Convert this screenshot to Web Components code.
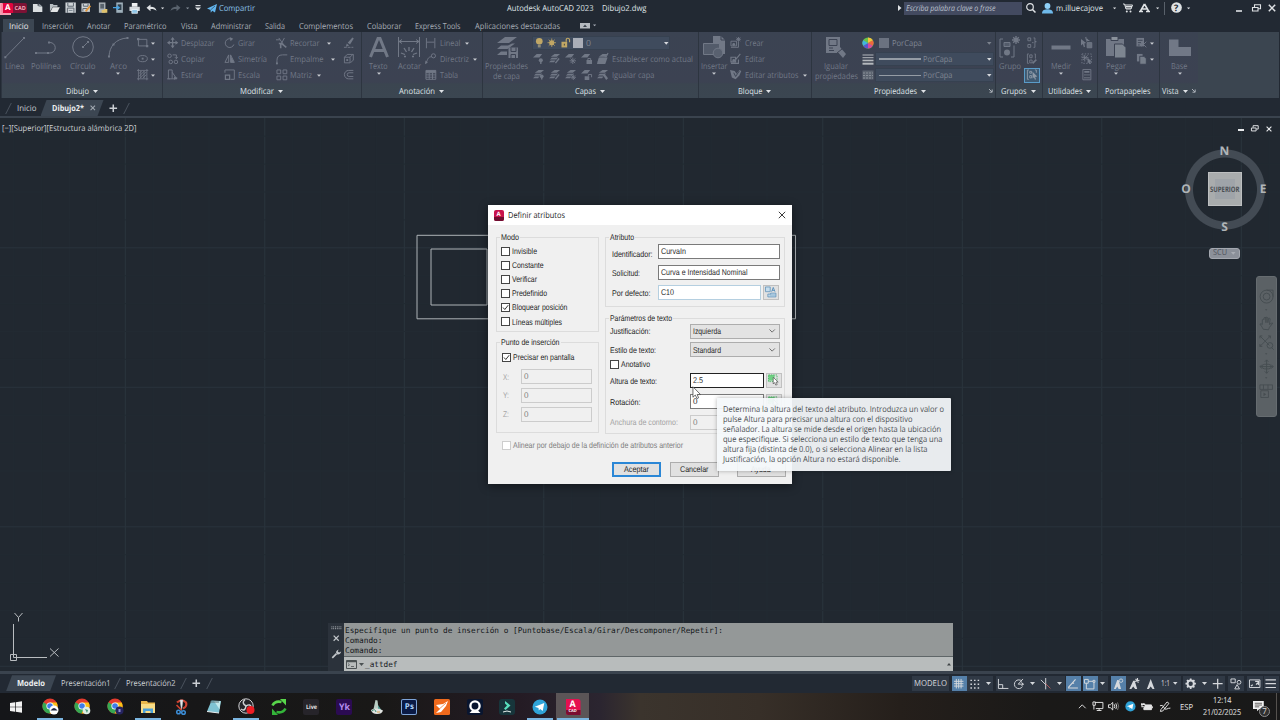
<!DOCTYPE html>
<html lang="es">
<head>
<meta charset="utf-8">
<title>Autodesk AutoCAD 2023 - Dibujo2.dwg</title>
<style>
    html, body {
        margin: 0;
        padding: 0;
    }
    body {
        --dy: .7px;
        width: 1280px;
        height: 720px;
        overflow: hidden;
        background: #212830;
        font: 8.3px/10px "Open Sans", "Noto Sans", sans-serif;
        text-rendering: geometricPrecision;
    }
</style>
</head>
<body>
<cad-app></cad-app>

<script>
// Icon table: [width, height, svg body]. Strokes use currentColor unless the icon has its own colours.
const F = 'fill="currentColor" stroke="none"';
const CHROME = `<g stroke="none"><circle cx="8" cy="8" r="7.6" fill="#e33b2e"/><path d="M8 8 1.4 4.2A7.6 7.6 0 0 0 7.5 15.6L11 9.6Z" fill="#36a852"/><path d="M8 4.4h6.7A7.6 7.6 0 0 1 7.5 15.6L11 9.5Z" fill="#fbc116"/><circle cx="8" cy="8" r="3.6" fill="#fff"/><circle cx="8" cy="8" r="2.8" fill="#3f7de8"/>`;
const LAYERS = `<path d="M2 4 6 1h6L8.500 4ZM1 7l2-1.800h5.500l1.500-.6L8 7ZM0 10l2-1.800h5L5.500 10Z" ${F}/>`;

const ICONS = {
    caret: [5, 3, `<path d="M0 0h5L2.500 3Z" ${F}/>`],
    caretSmall: [4, 3, `<path d="M0 .5h4L2 2.800Z" ${F}/>`],
    caretUp: [5, 3, `<path d="M0 3h5L2.500 0Z" ${F}/>`],
    caretRight: [4, 6, `<path d="M0 0v6L3.500 3Z" ${F}/>`],
    launcher: [5, 5, `<path d="M1 1l3 3M4.200 1.500v2.700H1.500"/>`],

    // quick access toolbar
    logo: [28, 12, `<rect width="12" height="12" x="-1" y="1" fill="#f7a0b4" stroke="none"/><path d="M2 1h9.500q2 0 2 1.500V11H2Z" fill="#e0063f" stroke="none"/><path d="M1 2 3 1v11L1 10Z" fill="#f68ba4" stroke="none"/><path d="M13.500 1H25q2 0 2 2v6.500q0 1.500-2 1.500H13.500Z" fill="#7c1235" stroke="none"/>`],
    newFile: [12, 10, `<path d="M1 1h5v2h2V1l3 3v5.500H1Z" fill="#d9dde0" stroke="none"/><path d="M7 .5 11 4H7Z" fill="#8b949c" stroke="none"/>`],
    open: [12, 10, `<path d="M1 9V1h3l1 1h4v2H4Z" fill="#b9bfc4" stroke="none"/><path d="M1.500 9.500 4 4.500h7.500L9 9.500Z" fill="#e3e5e6" stroke="none"/>`],
    save: [12, 12, `<path d="M.5.5h11v11H.5Z" fill="#cfd4d8" stroke="none"/><path d="M3 1v3.500h6V1M2.500 11.500v-5h7v5" stroke="#56606b"/><path d="M4 9h4" stroke="#7a858f"/>`],
    saveAs: [12, 12, `<path d="M.5 1.500h9v9h-9Z" fill="#cfd4d8" stroke="none"/><path d="M2.500 2v2.500h5V2M2 10V7h5" stroke="#56606b"/><path d="m5 10 5-6" stroke="#e0963d" stroke-width="2"/>`],
    openWeb: [12, 12, `<path d="M2 .5h7v11H2Z" fill="#aab1b7" stroke="none"/><path d="M3.500 2v5h4V2" fill="#59636d" stroke="none"/><path d="M5 11.500V8.500h2l1-1h3v4Z" fill="#e0c26c" stroke="none"/>`],
    saveWeb: [12, 12, `<path d="M3.500.5h7v11h-7Z" fill="#9fb0bb" stroke="none"/><path d="M5 2.500h4v6H5Z" fill="#30404d" stroke="none"/><path d="M0 6h6M4 4l2.500 2L4 8" stroke="#4aa3e0" stroke-width="1.500"/>`],
    print: [12, 11, `<path d="M3 0h6v4H3Z" fill="#eef0f1" stroke="none"/><path d="M.5 4h11v4.500H.5Z" fill="#d5d9dc" stroke="none"/><path d="M3 7h6v4H3Z" fill="#8fc6e8" stroke="#fff" stroke-width=".7"/>`],
    undo: [11, 8, `<path d="M4.500.5v2.200C8 2.700 10 4 10.500 7 9 5.300 7 4.900 4.500 5v2.200L.5 3.800Z" ${F}/>`],
    redo: [11, 8, `<path d="M6.500.5v2.200C3 2.700 1 4 .5 7 2 5.300 4 4.900 6.500 5v2.200l4-3.400Z" ${F}/>`],
    customize: [6, 6, `<path d="M.5 0v1.200h5V0ZM0 2.500h6L3 5.500Z" ${F}/>`],
    plane: [10, 9, `<path d="M0 4.500 10 0 8 8.500 5.200 6.800 3.800 8.800 3.500 6Z" fill="#62b5ee" stroke="none"/><path d="m3.500 6 4.500-4" stroke="#23303c" stroke-width=".6"/>`],
    search: [10, 10, `<circle cx="4" cy="4" r="3.300" stroke-width="1.200"/><path d="m6.500 6.500 3 3" stroke-width="1.500"/>`],
    user: [11, 11, `<circle cx="5.500" cy="3" r="2.900" fill="#8fd0f7" stroke="none"/><path d="M0 10.500C0 7 3 6.300 5.500 6.300S11 7 11 10.500Z" fill="#6fb9ea" stroke="none"/>`],
    cart: [10, 10, `<path d="M0 1h1.500L3 6h5l1.500-4H2M2.500 3.500h6.500M2.800 5h5.500"/><circle cx="3.800" cy="8.500" r="1" ${F}/><circle cx="7.500" cy="8.500" r="1" ${F}/>`],
    autodeskA: [11, 10, `<path d="M5.500 1 1.500 8M5.500 1l4 7M0 8.500h4M7 8.500h4M3.500 6h4" stroke-width="1.600"/>`],
    help: [12, 12, `<circle cx="6" cy="6" r="5.800" fill="#dfe2e4" stroke="none"/>`],
    min: [6, 8, `<path d="M0 7h6" stroke-width="1.600"/>`],
    restore: [9, 8, `<path d="M.5 3.500h5.500v3.500H.5ZM2.500 3V.800h6v4H6.500" stroke-width="1.100"/>`],
    close: [8, 8, `<path d="m.8.8 6.400 6.400M7.200.8.8 7.200" stroke-width="1.500"/>`],
    closeThin: [8, 8, `<path d="m.8.8 6.400 6.400M7.200.8.8 7.200" stroke-width=".9"/>`],
    mini: [6, 5, `<path d="M0 4h6" stroke-width="2"/>`],
    tabMark: [10, 6, `<path d="M0 0h10v5.500H0Z" fill="#b5bac0" stroke="none"/><path d="M5 1.500 7 4H3Z" fill="#3a424c" stroke="none"/>`],

    // ribbon, large
    line: [24, 24, `<path d="M2.500 22 21 3"/><path d="M1.300 21.300h2v2h-2ZM20 2h2v2h-2Z" ${F}/>`],
    pline: [24, 24, `<path d="M2 18h14a5.200 5.200 0 0 0 0-10.500"/><path d="M1 17h2v2H1ZM13 17h2v2h-2ZM14 6.500h2v2h-2Z" ${F}/>`],
    circle: [24, 24, `<circle cx="12" cy="12" r="10.300"/><path d="m12 12 4.500-4.500"/><path d="M11 11h2v2h-2ZM16 6h2v2h-2Z" ${F}/>`],
    arc: [24, 24, `<path d="M3 21.500C3.500 11 10 3.800 21 3"/><path d="M2 20.500h2v2H2ZM20.500 2h2v2h-2ZM6.500 8.500h2v2h-2Z" ${F}/>`],
    text: [24, 24, `<path d="M3.500 22 11 3.500h2L20.500 22M7 15.500h10" stroke-width="3"/>`],
    dim: [24, 24, `<path d="M1.500 2v20M22.500 2v20M2 6.500h20M5 4.500 2 6.500l3 2M19 4.500l3 2-3 2"/><path d="M12 12v4M7 13l2.500 4M17 13l-2.500 4M4 18l4 1.500M20 18l-4 1.500M7 21.500h2M15 21.500h2" stroke-width="1.300"/>`],
    layerProps: [24, 24, `<path d="m2 8 8-6h12l-8 6ZM2 14l4-3.500h7l4-2h3L12.500 14ZM2 20l4-3.500h6v3.500Z" ${F}/><path d="M13.500 12.500h9.500v10.500h-9.500Z" ${F}/><path d="M16 12.500v4h5v-4M16 23v-3.500h4.500V23" stroke="#3c4353"/>`],
    insert: [24, 24, `<path d="M11 1h8l4 4v14H11Z" ${F}/><path d="M1.500 8.500h16v11h-16Z" fill="#535b6a"/><circle cx="16" cy="18" r="4.800" fill="#596170"/><path d="M19 1v4h4" stroke="#3c4353"/>`],
    match: [24, 24, `<path d="M2 2h14v16H2Z" ${F}/><path d="M5 4.500h8v6H5ZM5 13h4M10 15.500H5" stroke="#3c4353"/><path d="m12 15 4-3 6 7-3 4Z" ${F}/><path d="m13 18 5-4" stroke="#3c4353"/>`],
    group: [24, 24, `<path d="M5 4H2v18h3M16 10.500V22h-3"/><path d="M6 7.500h6v4H6Z" fill="#535b6a"/><circle cx="9" cy="17.500" r="3" ${F}/><path d="M18 1v8M14 5h8M15.200 2.200l5.600 5.600M20.800 2.200l-5.600 5.600" stroke-width="1.400"/>`],
    measure: [24, 24, `<path d="M2.500 10.500h19v4h-19Z" ${F}/>`],
    paste: [24, 24, `<path d="M2 4h18v17H2Z" ${F}/><path d="M7 1.500h7v4H7Z" fill="#8a919b" stroke="#3c4353"/><path d="M10.500 9h8l3.500 3.500V23H10.500Z" fill="#7d8590" stroke="#3c4353"/>`],
    base: [24, 24, `<path d="M1 4.500h9.500V12H23v9H1Z" ${F}/>`],

    // ribbon, small
    rect: [12, 12, `<path d="M1.500 2.500h9v7h-9Z"/><path d="M0 1h2.500v2.500H0ZM9.500 8.500H12V11H9.500Z" ${F}/>`],
    ellipse: [12, 12, `<ellipse cx="6" cy="6" rx="5" ry="3.300"/><path d="M5 5h2v2H5Z" ${F}/>`],
    hatch: [12, 12, `<path d="M1.500 0v12M10.500 0v12M0 1.500h12M0 10.500h12M2 5l3-3M2 8l6-6M3 10l7-7M6 10l4-4M4 2v8M7.500 2v8" stroke-width=".9"/>`],
    move: [12, 12, `<path d="M6 1v10M1 6h10" stroke-width="1.300"/><path d="m6 0 2.200 3H3.800ZM6 12l2.200-3H3.800ZM0 6l3-2.200v4.400ZM12 6 9 3.800v4.400Z" ${F}/>`],
    copy: [12, 12, `<circle cx="2.700" cy="3" r="1.900"/><circle cx="4" cy="9.500" r="1.900"/><circle cx="9.500" cy="9.500" r="1.900"/><path d="M6 2h4v4M8.500 4.500 10 6l1.500-1.500"/>`],
    stretch: [12, 12, `<path d="M1.500 1h4v9.500h-4ZM5.500 3.500 10.500 10.500h-5M0 10.500h3"/><path d="m7.500 8 4 1.500-4 2Z" ${F}/>`],
    rotate: [12, 12, `<path d="M8 2.200A4.700 4.700 0 1 0 10.500 8"/><path d="M6 0 9.800 1.800 7 4.500Z" ${F}/>`],
    mirror: [12, 12, `<path d="M5 2v8H1ZM7 2v8h4Z"/><path d="M7 3v7h4Z" ${F}/>`],
    scale: [12, 12, `<path d="M1 4V1h10v10H7"/><path d="M1.500 6.500h4.500v4.500H1.500Z" stroke-width="1.300"/>`],
    trim: [12, 12, `<path d="m3 1 5 7M9 1 5 8M0 3h4"/><path d="M3 7h3l5 4M5 7v5" stroke-width="1.700"/>`],
    fillet: [12, 12, `<path d="M1 12V8q0-6 6-6h5"/><path d="M0 10h2v2H0Z" ${F}/>`],
    array: [12, 12, `<path d="M1 1h4v4H1ZM7.500 1h4v4h-4ZM1 7.500h4v4H1ZM7.500 7.500h4v4h-4Z"/>`],
    erase: [12, 12, `<path d="m5 6 5-5.500 1.500 1.200L7.500 8ZM4 7l2.500 2L3 10.500Z" ${F}/><path d="M1 11h10" stroke-dasharray="3 1"/>`],
    explode: [12, 12, `<path d="M1.500 4.500h6v6h-6ZM1.500 4.500l3-3h6.500v6l-3 3M7.500 4.500l3-3"/><path d="M3.500 6.500h2v2h-2Z" ${F}/>`],
    offset: [12, 12, `<path d="M11 1.500H6a4.500 4.500 0 0 0 0 9h5M11 4H6.500a2 2 0 0 0 0 4H11"/>`],
    linear: [12, 12, `<path d="M1.500 1v11M10.500 1v11M2 5.500h8"/>`],
    leader: [12, 12, `<circle cx="9" cy="3" r="2.200"/><path d="M7 4C3 4 3 7 1 11"/><path d="m0 12 .5-4 2.500 2Z" ${F}/>`],
    table: [12, 12, `<path d="M1 1.500h10.500v9.500H1ZM1 4h10.500M1 6.300h10.500M1 8.700h10.500M4.500 4v7M8 4v7"/><path d="M1 1.500h10.500V4H1Z" ${F}/>`],
    layOff: [12, 12, `<path d="m0 5 4-4h6L7 5Z" ${F}/><circle cx="8.500" cy="8" r="2.200" ${F}/><path d="M8.500 9v3" stroke-width="1.500"/>`],
    layIso: [12, 12, LAYERS + `<path d="m7 11 4-5" stroke-width="1.500"/>`],
    layFrz: [12, 12, `<path d="m0 5 4-4h6L7 5Z" ${F}/><path d="M8.500 5v7M5 8.500h7M6 6l5 5M11 6l-5 5"/>`],
    layLock: [12, 12, `<path d="m0 5 4-4h6L7 5ZM6 7.500h6V12H6Z" ${F}/><path d="M7.500 8V6h3v2"/>`],
    layCur: [12, 12, LAYERS + `<path d="M2 5h9.500L9 12H0Z" ${F}/><path d="m8 3 2 1 2-4" stroke-width="1.300"/>`],
    layOn: [12, 12, LAYERS + `<circle cx="9.500" cy="8" r="2" ${F}/><path d="M9.500 9v2.500" stroke-width="1.500"/>`],
    layThaw: [12, 12, LAYERS + `<path d="M9 6v6M6.500 9h5.500M7 7l4 4M11 7l-4 4"/>`],
    layUnlock: [12, 12, `<path d="m0 5 4-4h6L7 5ZM4 8h5v4H4Z" ${F}/><path d="M8 8V6h3.500v3"/>`],
    layMatch: [12, 12, LAYERS + `<path d="m6 6 2-1 4 5-2 2Z" ${F}/>`],
    blockNew: [12, 12, `<path d="M1 4.500h6v5H1ZM1 11h8M9 5v6"/><path d="M9 0v5M6.500 2.500h5M7 .7l4 3.600M11 .7 7 4.300"/><circle cx="4" cy="8" r="1.500" ${F}/>`],
    blockEdit: [12, 12, `<path d="M1 4.500h5v5H1ZM1 11h8V7M6 7l5-6" stroke-width="1.200"/><circle cx="4" cy="8" r="1.500" ${F}/>`],
    attEdit: [12, 12, `<path d="m0 1 5 1 2 3 3-4 2 1-2 5-4 4-4-2Z" ${F}/><path d="m4 4 2 4 4-6" stroke="#3c4353"/>`],
    wheel: [12, 12, `<g stroke="none"><circle cx="6" cy="6" r="5.600" fill="#69c24a"/><path d="M6 6 6 .4A5.600 5.600 0 0 1 10.900 3.200Z" fill="#f4c33c"/><path d="M6 6 10.900 3.200A5.600 5.600 0 0 1 10.900 8.800Z" fill="#f0683c"/><path d="M6 6 10.900 8.800A5.600 5.600 0 0 1 6 11.600Z" fill="#d64a9a"/><path d="M6 6V11.600A5.600 5.600 0 0 1 1.100 8.800Z" fill="#5b55d0"/><path d="M6 6 1.100 8.800A5.600 5.600 0 0 1 1.100 3.200Z" fill="#41b4e0"/></g>`],
    weights: [12, 12, `<path d="M.5 2h11M.5 4.700h11" stroke="#b4b8bd"/><path d="M.5 7.500h11" stroke="#b4b8bd" stroke-width="1.600"/><path d="M.5 10.700h11" stroke="#b4b8bd" stroke-width="2"/>`],
    ltype: [12, 12, `<path d="M.5 1.500h11v9H.5Z" fill="#5c6470" stroke="none"/><path d="M1 4h10M1 6.500h10M1 9h10" stroke="#8a9099" stroke-dasharray="2 1"/>`],
    bulb: [9, 12, `<circle cx="4.500" cy="4.500" r="3.500" fill="#c0a765" stroke="none"/><path d="M3 8h3v3H3Z" fill="#8d8b79" stroke="none"/>`],
    sun: [10, 12, `<circle cx="5" cy="6" r="2.700" fill="#c0a765" stroke="none"/><path d="M5 1.500v9M.5 6h9M1.800 2.800l6.400 6.400M8.200 2.800 1.800 9.200" stroke="#c0a765" stroke-width=".8"/>`],
    lock: [10, 12, `<path d="M.5 5h6v6h-6Z" fill="#c0a765" stroke="none"/><path d="M5.500 5V3q0-1.700 1.700-1.700T9 3v2.500" stroke="#c0a765" stroke-width="1.200"/><path d="M3 7h1v2H3Z" fill="#3c3f42" stroke="none"/>`],
    ungroup: [12, 12, `<path d="M2 1h3v3H2ZM2 8h3v3H2ZM8 1h1.500v4h1.500H9.500v6H8M6.500 6H8"/>`],
    grpEdit: [12, 12, `<path d="M3 1H1.500v10H3M4 2h2.500v3H4ZM4 7.500h2.500v3H4ZM9 1h1v5"/><path d="m7 11 4-4" stroke-width="1.700"/>`],
    grpSel: [12, 12, `<path d="M3 1H1.500v10H3M4 2.500h2v2H4ZM4 7h2v2.500H4ZM9.500 1H11v3"/><path d="M7 3v7l1.500-1.200 1 2.700 1.200-.5-1-2.600 2.300-.3Z" ${F}/>`],
    qselect: [12, 12, `<path d="M0 2v7l2-1.500L3 11l1.300-.7L3.500 7 5.500 6.500Z" ${F}/><path d="M6.500 6h5v5.500h-5Z" fill="#69717e"/><path d="m5 0 .8 3L9 4M7 2l-1 3" stroke-width="1.200"/>`],
    selAll: [12, 12, `<path d="M1 1h10v10H1Z" stroke-dasharray="1.500 1.500"/><path d="M4 2v7M1 5h7M2 2.500l5 5M7 2.500l-5 5"/><path d="M7 5v6l1.500-1 1 2 1-.6-.8-2 1.800-.4Z" ${F}/>`],
    calc: [12, 12, `<path d="M2 .5h8.500v11H2Z"/><path d="M3.500 2h5.500v2H3.500ZM3.500 5.500H5V7H3.500ZM5.700 5.500h1.400V7H5.700ZM7.800 5.500h1.400V7H7.800ZM3.500 8.500H5V10H3.500ZM5.700 8.500h1.400V10H5.700ZM7.800 8.500h1.400V10H7.800Z" ${F}/>`],
    cut: [12, 12, `<path d="M.5 1h8v9h-8Z" ${F}/><path d="M2 3.500h5M2 6h4M2 8.500h2" stroke="#3c4353"/><path d="m5 5 6 6M11 5l-5 5"/>`],
    copyClip: [12, 12, `<path d="M1 1h6v8H1Z" ${F}/><path d="M4 3.500h4.500l2.500 2.500v6H4Z" fill="#767e8a" stroke="#3c4353"/>`],

    // model space
    wheelNav: [16, 16, `<circle cx="8" cy="8" r="6.800"/><circle cx="8" cy="8" r="3.600"/><path d="M8 1.200h6.800V8"/>`],
    hand: [16, 16, `<path d="M4.500 14C3 11 2 10 1 8.500q1-1 2.500.5V4q1-1.500 1.800 0V2q1.200-1.500 2 0v5V1.500q1.300-1 2 .5v5l.8-4.500q1.500-.7 1.600.7L11 9q2-2 3.500-1.500L11 12l-1 2.500Z"/>`],
    zoomExt: [16, 16, `<path d="m1 1 10 10M12 1 1 12M1 3.500V1h2.500M9.500 1H12v2.500M1 9.500V12h2.500"/><circle cx="11.500" cy="11" r="3"/><path d="m13.500 13.500 2 2"/>`],
    orbit: [16, 16, `<path d="M8 1v14M1 8h14M6 3l2-2 2 2M6 13l2 2 2-2M3 6 1 8l2 2M13 6l2 2-2 2"/><ellipse cx="8" cy="8" rx="5" ry="2.500"/>`],
    motion: [16, 16, `<path d="M1 1h14v5H1ZM5 1v5M10 1v5M2 7.500h8.500v7.500H2Z"/><path d="M5 9.500v4l3-2Z" ${F}/>`],
    wrench: [12, 12, `<path d="m1.500 10.500 5-5" stroke-width="2"/><path d="M6 4.500Q5.500 2 9 .5L8 3l1.500 1L12 3Q11 7 7.500 6.500Z" ${F}/>`],
    grip: [12, 4, `<path d="M.5 1h11M.5 3h11" stroke-dasharray="1 1"/>`],
    prompt: [11, 9, `<path d="M.5.5h10v8H.5Z"/><path d="M.5 1.500h10" stroke-width="1.500"/><path d="m2 3.500 1.500 1.300L2 6M5 6.500h3" stroke-width=".8"/>`],

    // status bar
    grid: [12, 12, `<path d="M3.500 1v10M8.500 1v10M6 1v10M1 3.500h10M1 8.500h10M1 6h10"/>`],
    dots: [12, 12, `<path d="M1.500 2.500h10M1.500 6.500h10M1.500 10.500h10" stroke-dasharray="1.600 2.200" stroke-width="1.500"/>`],
    ortho: [12, 12, `<path d="M1.500 1v10H12M2 7h4v4"/>`],
    polar: [12, 12, `<path d="M9.500 3.500A4.600 4.600 0 1 0 10 9M5.500 6.500h6M5.500 6.500 10.500 1M9 4.500l1.500 2-1.500 2"/>`],
    iso: [12, 12, `<path d="m1 2 5 5M6 0v12"/><path d="m6 6 5 5" stroke="#b0595c"/>`],
    track: [12, 12, `<path d="M1 10.500h10.500M1.500 10 9 1.500M5.500 5.500h2" stroke-width="1.200"/>`],
    osnap: [12, 12, `<path d="M2.500 3.500h8v8h-8Z"/><path d="M.5 1.500h4v4h-4ZM9.500 2.500h2v2h-2Z" fill="#5580a9"/>`],
    annoVis: [12, 12, `<path d="M5.500 2 2 11.500h2L5.500 9 7 11.500h2.500L7 2Z" ${F}/><circle cx="9.500" cy="2.800" r="1.800" stroke-width=".9"/>`],
    annoAuto: [12, 12, `<path d="M5.500 3 1.500 11.500h2L5.500 9l2 2.500h2.200L7 3Z" ${F}/><path d="M7 3.500 12 2.500M8 1l3 4M10 0v4" stroke-width="1.200"/>`],
    anno: [12, 12, `<path d="M6 1 2 11.500h2L6 9l2 2.500h2Z" ${F}/>`],
    gear: [12, 12, `<circle cx="6" cy="6" r="3.300" stroke-width="2"/><path d="M6 .5v2M6 9.500v2M.5 6h2M9.500 6h2M2.100 2.100l1.400 1.400M8.500 8.500l1.400 1.400M9.900 2.100 8.500 3.500M3.500 8.500 2.100 9.900" stroke-width="1.800"/>`],
    plus: [12, 12, `<path d="M6 .8v10.400M.8 6h10.400" stroke-width="1.300"/>`],
    plusTab: [9, 9, `<path d="M4.500.5v8M.5 4.500h8" stroke-width="1.600"/>`],
    isolate: [12, 12, `<path d="M1 1h4.500v4H1ZM5 11.500h5L7.500 7Z"/><circle cx="9.500" cy="4.500" r="2"/>`],
    clean: [12, 12, `<path d="M.5 2h11v8H.5Z"/><path d="M6.500 3.500H10V6.500L8.800 5.500 7.500 7M2 8.500 4 7" stroke-width="1.300"/>`],
    menu: [12, 12, `<path d="M.5 2h11M.5 6h11M.5 10h11" stroke-width="1.300"/>`],

    // taskbar
    windows: [12, 12, `<path d="m0 2 5-.7v4.400H0ZM5.700 1.200 12 .3v5.400H5.700ZM0 6.300h5v4.400L0 10ZM5.700 6.300H12v5.400l-6.300-.9Z" fill="#f2f2f2" stroke="none"/>`],
    chrome1: [17, 17, CHROME + `<circle cx="12" cy="12" r="4.500" fill="#fff"/><path d="M8.500 12.500q3.500-5 7 0Z" fill="#1d2740"/></g>`],
    chrome2: [17, 17, CHROME + `<circle cx="12.500" cy="12.500" r="3.800" fill="#dfeee5"/><path d="M11 11l2 4 1-3Z" fill="#4a9a7c"/></g>`],
    chrome3: [17, 17, CHROME + `<circle cx="12.500" cy="12.500" r="4" fill="#25235f"/><path d="M11.500 11h2v3h-2Z" fill="#8f8ad0"/></g>`],
    folder: [16, 16, `<g stroke="none"><path d="M1 2h6l1 1.500h7V14H1Z" fill="#e9b84c"/><path d="M1 5h14v9H1Z" fill="#f8dc85"/><path d="M3 9.500h10V14h-2.500v-2h-5v2H3Z" fill="#4b9fd8"/></g>`],
    snip: [16, 16, `<path d="M4 3.500Q9-1 13 3.500 14.500 7.500 10 9.500" stroke="#cf4230" stroke-width="2.200"/><path d="M7 1 8.500 11.500 10 1Z" fill="#e5e8ea" stroke="#bcc3c8" stroke-width=".5"/><path d="m3.500 6 5 5" stroke="#cf4230" stroke-width="1.600"/><circle cx="5.500" cy="13" r="1.800" stroke="#3c8dd6" stroke-width="1.500"/><circle cx="10.500" cy="13.500" r="1.800" stroke="#3c8dd6" stroke-width="1.500"/>`],
    note: [16, 16, `<path d="M5.500 1.500 15 2l-2 12-12-1.500Z" fill="#7fc3d3" stroke="none"/><path d="m8 2 6.500.3-1 8Z" fill="#c4e9ec" stroke="none"/><path d="m1 12.500 12 1.500" stroke="#e9edee"/><path d="M4 3h9" stroke="#5a7077"/>`],
    obs: [17, 17, `<circle cx="8" cy="8" r="7.200" fill="#25252a" stroke="#cfcfd2"/><path d="M8 8Q3 5 7 1.500M8 8q5-3 5 2M8 8Q7 14 3 11" stroke="#cfcfd2" stroke-width="1.500"/><circle cx="12.500" cy="12" r="4" fill="#ee1c23" stroke="none"/>`],
    sync: [16, 16, `<path d="M1.500 6.500Q4 1.500 10.500 3" stroke="#58d64b" stroke-width="2.600"/><path d="M9 0h6v6.500Z" fill="#58d64b" stroke="none"/><path d="M14.500 9.500Q12 14.500 5.500 13" stroke="#34b53a" stroke-width="2.600"/><path d="M7 16H1V9.500Z" fill="#34b53a" stroke="none"/>`],
    boat: [16, 16, `<path d="M6.500 1 8.500 1.500 9.500 10H4.500Z" fill="#b9cdc4" stroke="none"/><path d="M9 6 13 12 9 11Z" fill="#5aa39a" stroke="none"/><path d="M2 11q6-3 12 .5Q13 15 8 15T2 11Z" fill="#e1e4e1" stroke="none"/><path d="M3 12q3-3 4 1" stroke="#3d8f73"/><path d="M8 13h3" stroke="#d8a155"/>`],
    orange: [16, 16, `<rect width="16" height="16" rx="1.500" fill="#f06a1c" stroke="none"/><path d="M2 6 9 5l5-3-2 5-5 6-5 1 4-4Z" fill="#fff" stroke="none"/><path d="m3 12 9-8" stroke="#f06a1c" stroke-width=".7"/>`],
    ring: [16, 16, `<rect width="16" height="16" rx="2" fill="#09152f" stroke="none"/><circle cx="8" cy="7" r="4.600" fill="#09152f" stroke="#fff" stroke-width="2.300"/><path d="m2.500 14 3-3h5l3 3Z" fill="#fff" stroke="none"/>`],
    filmora: [16, 16, `<rect width="16" height="16" rx="3" fill="#17353b" stroke="none"/><path d="m6 2 5.500 4.500L6.500 11 5 9.500l3-3-2-2Z" fill="#58e0bd" stroke="none"/><path d="M4 13q4-2 8 0" stroke="#e8f2f0"/>`],
    telegram: [16, 16, `<circle cx="8" cy="8" r="7.500" fill="#2fa3d8" stroke="none"/><path d="m2.800 7.800 9.500-3.800-1.600 8-2.500-1.900-1.400 1.300-.3-2.400Z" fill="#fff" stroke="none"/>`],
    acad: [16, 16, `<path d="M1 0h12q2.500 0 2.500 2.500V16H3.500Q1 16 1 14Z" fill="#e51050" stroke="none"/><path d="M1 11h14.500v5H3.500Q1 16 1 14Z" fill="#7b0d31" stroke="none"/>`],
    chevUp: [10, 6, `<path d="m1 5 4-4 4 4" stroke-width="1.100"/>`],
    net: [12, 11, `<path d="M3 1.500h8.500V8H4M1 1h2.500v3.500H1ZM5 10h5M7.500 8v2M2 4.500V9"/>`],
    sound: [12, 11, `<path d="M.5 4v3H2.500L5 9.500v-8L2.500 4Z"/><path d="M6.500 3.500q1.500 2 0 4M8.200 2.500q2 3 0 6"/><path d="M10 1.500q2.500 4 0 8" stroke-opacity=".45"/>`],
    battery: [12, 8, `<path d="M4 2h7v5H3V5" fill="#e5e5e5"/><path d="M0 1.500h4.500M1 0v1.500M3 0v1.500M1 2v2h2.500" stroke-width="1.200"/><path d="M12 3.500v2"/>`],
    pen: [12, 12, `<path d="M2 9 8.500 1l2 1.500L4 10.500l-2.500.5ZM1 5q3-1.500 4 1.500T8 8.500t4-1"/>`],
    notif: [13, 12, `<path d="M0 0h12v9H7l-2.500 2.500V9H0Z" fill="#f1f1f1" stroke="none"/><path d="M2 2.500h8M2 4.500h8M2 6.500h5" stroke="#33302d" stroke-width=".8"/>`],

    // dialog
    dlgLogo: [10, 11, `<rect width="10" height="11" rx="2" fill="#c7124c" stroke="none"/><path d="M0 7h10v2q0 2-2 2H2Q0 11 0 9Z" fill="#6f0d30" stroke="none"/>`],
    field: [12, 12, `<path d="M.5 1h5v5h-5ZM6 7.500h5.500v4H3v-3h3Z" fill="#c6dded" stroke="#5b8db5" stroke-width=".8"/><path d="m7 6 1.700-4.500L10.500 6M7.600 4.600h2.200" stroke="#3c7fb4" stroke-width=".8"/><path d="M5 9.500h6" stroke="#5b8db5" stroke-width=".6"/>`],
    pick: [12, 12, `<path d="M.5 1h6.500v6H.5Z" fill="#6fd083" stroke="none"/><path d="M.5 1h9v7h-9Z" stroke="#4db868" stroke-dasharray="1.500 1"/><path d="M5.500 3.500v7L7 9l1.200 2.700 1.500-.6L8.500 8.500h2.200Z" fill="#fff" stroke="#4b4b4b" stroke-width=".7"/>`],
    chev: [7, 4, `<path d="m.5.500 3 3 3-3" stroke="#555" stroke-width=".9"/>`],
    cursor: [10, 14, `<path d="M1 .8v11l2.500-2.300 1.700 3.700 1.800-.8L5.400 9H9Z" fill="#fff" stroke="#444" stroke-width=".8"/>`],
};

class CadElement extends HTMLElement {
    constructor() {
        super();
        this.attachShadow({ mode: "open" });
    }

    connectedCallback() {
        this.shadowRoot.innerHTML = `<style>${this.styles()}</style>${this.template()}`;
    }

    attr(name, fallback = "") {
        return this.getAttribute(name) ?? fallback;
    }

    styles() { return ""; }
    template() { return "<slot></slot>"; }
}

class UiIcon extends CadElement {
    styles() {
        return `
            :host { display: block; flex: none; }
            svg { display: block; overflow: visible; fill: none; stroke: currentColor; }
        `;
    }

    template() {
        const [w, h, body] = ICONS[this.attr("name")];
        const k = Number(this.attr("scale", "1"));
        return `<svg width="${w * k}" height="${h * k}" viewBox="0 0 ${w} ${h}">${body}</svg>`;
    }
}

// One line of text, condensed or widened so that it takes exactly "w" pixels
class FitText extends CadElement {
    styles() {
        return `
            :host { display: block; flex: none; white-space: nowrap; }
            span { display: inline-block; vertical-align: top; transform-origin: 0 0; }
        `;
    }

    template() { return "<span><slot></slot></span>"; }

    connectedCallback() {
        super.connectedCallback();
        const w = Number(this.attr("w"));
        const span = this.shadowRoot.querySelector("span");
        const natural = span.getBoundingClientRect().width;
        this.style.width = w + "px";
        span.style.transform = `translateY(var(--dy)) scaleX(${w / natural})`;
    }
}

const icon = (name, style = "", scale = 1) => `<ui-icon name="${name}" scale="${scale}" style="${style}"></ui-icon>`;
const text = (s, w, style = "") => `<fit-text w="${w}" style="${style}">${s}</fit-text>`;

// A box of fixed width that centres what it holds
class BarSlot extends CadElement {
    styles() {
        return `
            :host { display: flex; flex: none; align-items: center; justify-content: center; box-sizing: border-box; width: ${this.attr("w")}px; }
            :host([boxed]) { background: #303945; height: 15px; }
            :host([on]) { background: #5580a9; height: 15px; }
        `;
    }
}
const slot = (w, inner, style = "", attrs = "") => `<bar-slot w="${w}" style="${style}" ${attrs}>${inner}</bar-slot>`;

class TitleBar extends CadElement {
    styles() {
        return `
            :host { display: flex; height: 16px; align-items: center; background: #222933; color: #dfe2e5; box-sizing: border-box; }
            .brand { position: relative; width: 30px; }
            .brand b { position: absolute; left: 5px; top: 1px; font: 700 8px/10px "Open Sans", sans-serif; color: #fff; }
            .brand i { position: absolute; left: 14.500px; top: 1px; font: 700 5.5px/10px "Open Sans", sans-serif; color: #f1a8ba; }
            .search { display: flex; align-items: center; width: 118px; height: 13px; margin-left: 2.500px; padding-left: 2px; box-sizing: border-box; background: #434a60; color: #bcc1cd; font-style: italic; }
            .q { position: absolute; color: #222933; font-weight: 700; font-size: 9px; }
        `;
    }

    template() {
        const quick = ["newFile", "open", "save", "saveAs", "openWeb", "saveWeb", "print"];
        return `
            <div class="brand">${icon("logo")}<b>A</b><i>CAD</i></div>
            ${quick.map(n => slot(16.1, icon(n, "", 0.94))).join("")}
            ${slot(17.5, icon("undo"))}${slot(5, icon("caretSmall", "", 0.8))}
            ${slot(21, icon("redo"), "color:#59626d")}${slot(3, icon("caretSmall", "", 0.8), "color:#87909a")}
            ${slot(17, icon("customize"))}
            ${slot(12, icon("plane"))}
            ${text("Compartir", 36, "color:#8cc3ea;margin-left:1px")}
            ${text("Autodesk AutoCAD 2023", 86.5, "margin-left:251.500px")}
            ${text("Dibujo2.dwg", 44.5, "margin-left:8.500px")}
            ${icon("caretRight", "margin-left:251.500px")}
            <div class="search">${text("Escriba palabra clave o frase", 89.5)}</div>
            ${slot(18, icon("search"))}${slot(14, icon("user"))}
            ${text("m.illuecajove", 47, "margin-left:2px")}
            ${slot(22, icon("caretSmall", "", 0.8))}${slot(6, icon("cart"))}
            ${slot(26, icon("autodeskA"))}${slot(0, icon("caretSmall", "", 0.8), "margin-right:7px")}
            ${slot(1, "", "height:13px;background:#59616b;margin-right:3px")}
            ${slot(16, `${icon("help", "", 0.92)}<div class="q">?</div>`)}
            ${slot(8, icon("caretSmall", "", 0.8))}
            ${slot(17, icon("min"), "margin-left:38.500px")}${slot(17, icon("restore"))}${slot(15, icon("close"))}
        `;
    }
}

class MenuTabs extends CadElement {
    styles() {
        return `
            :host { display: flex; height: 16px; align-items: flex-end; background: #222933; color: #a7adb6; }
            .active { display: flex; justify-content: center; width: 31px; height: 13px; margin: 0 7.500px 0 3px; line-height: 13px; background: #3c4652; color: #e8eaec; }
            .tabs { display: flex; gap: 13.850px; line-height: 13px; }
            .mark { display: flex; align-items: center; gap: 3px; height: 13px; margin-left: 20px; }
        `;
    }

    template() {
        const tabs = [["Inserción", 31.5], ["Anotar", 23.5], ["Paramétrico", 42.5], ["Vista", 16.5], ["Administrar", 40.5],
            ["Salida", 20], ["Complementos", 54], ["Colaborar", 34.5], ["Express Tools", 45.5], ["Aplicaciones destacadas", 85]];
        return `
            <div class="active">${text("Inicio", 19.5)}</div>
            <div class="tabs">${tabs.map(t => text(t[0], t[1])).join("")}</div>
            <div class="mark">${icon("tabMark")}${icon("caretSmall", "", 0.8)}</div>
        `;
    }
}

class RibbonPanel extends CadElement {
    styles() {
        return `
            :host { display: flex; flex-direction: column; flex: none; box-sizing: border-box; width: ${this.attr("w")}px; height: 66px; box-shadow: inset 1px 0 #2d3540; background: linear-gradient(#3b4352 0, #3c4252 50px, #3b4550 52px, #3b4651); color: #717886; }
            .body { display: flex; height: 48px; padding-top: 3px; }
            .foot { display: flex; height: 15px; align-items: center; color: #dfe2e6; }
            .name { display: flex; flex: 1; justify-content: center; align-items: center; gap: 4px; }
            .name ui-icon { padding-top: 1px; }
            .launch { display: flex; width: 7px; color: #aab0b8; }
        `;
    }

    template() {
        const tail = this.hasAttribute("plain") ? "" : icon("caret");
        const launch = this.hasAttribute("launcher") ? `<div class="launch">${icon("launcher")}</div>` : "";
        return `
            <div class="body"><slot></slot></div>
            <div class="foot"><div class="name">${text(this.attr("label"), this.attr("lw"))}${tail}</div>${launch}</div>
        `;
    }
}

class BigTool extends CadElement {
    styles() {
        return `
            :host { display: flex; flex-direction: column; align-items: center; flex: none; width: ${this.attr("w")}px; height: 48px; }
            .label { display: flex; flex-direction: column; align-items: center; margin-top: 2px; }
            .arrow { margin-top: 1px; color: #c4c8ce; }
        `;
    }

    template() {
        const lines = this.attr("label").split("|");
        const widths = this.attr("lw").split("|");
        return `
            ${icon(this.attr("icon"))}
            <div class="label">${lines.map((s, i) => text(s, widths[i])).join("")}</div>
            ${this.hasAttribute("menu") ? `<div class="arrow">${icon("caretSmall")}</div>` : ""}
        `;
    }
}
const big = (name, w, label, lw, menu = "menu") => `<big-tool icon="${name}" w="${w}" label="${label}" lw="${lw}" ${menu}></big-tool>`;

class SmallTool extends CadElement {
    styles() {
        return `
            :host { display: flex; align-items: center; height: 16px; }
            .caret { margin-left: ${this.attr("gap", "5")}px; color: #c9cdd2; }
        `;
    }

    template() {
        const label = this.attr("label");
        return `
            ${icon(this.attr("icon"), "", 0.94)}
            ${label ? text(label, this.attr("lw"), "margin-left:3.500px") : ""}
            ${this.hasAttribute("gap") ? `<div class="caret">${icon("caretSmall")}</div>` : ""}
        `;
    }
}
const small = (name, label = "", lw = 0, gap = null) => `<small-tool icon="${name}" label="${label}" lw="${lw}" ${gap === null ? "" : `gap="${gap}"`}></small-tool>`;
const col = (w, inner, style = "") => `<div style="flex:none;width:${w}px;${style}">${inner}</div>`;

class RibbonCombo extends CadElement {
    styles() {
        return `
            :host { display: flex; align-items: center; box-sizing: border-box; width: ${this.attr("w")}px; height: 14px; background: #3f4b5d; box-shadow: inset 0 0 0 1px #364150; color: #7f8692; }
            :host([flat]) { background: transparent; box-shadow: none; }
            .end { margin-left: auto; margin-right: 2px; color: #d5d8dc; }
            :host([flat]) .end { color: #7b828d; }
        `;
    }

    template() { return `<slot></slot><div class="end">${icon("caret", "", 0.9)}</div>`; }
}

class CadRibbon extends CadElement {
    styles() {
        return `
            :host { display: flex; height: 66px; padding: 0 1px; background: #222933; }
            .rest { flex: 1; background: #3b4550; }
            .row { display: flex; align-items: center; height: 16px; }
            .sw { width: 10px; height: 10px; }
            .ln { width: 42px; height: 1px; margin: 0 2px 0 4px; background: #959ca5; }
            .sel { display: flex; align-items: center; justify-content: center; box-sizing: border-box; width: 16px; height: 15px; border: 1px solid #5a9cc8; background: #3f5a72; color: #8d99a6; }
        `;
    }

    template() {
        const layerIcons = names => names.map(n => slot(16, icon(n, "", 0.92))).join("");
        return `
            <ribbon-panel w="161" label="Dibujo" lw="23">
                ${big("line", 28, "Línea", 19.5, "")}
                ${big("pline", 33, "Polilínea", 30, "")}
                ${big("circle", 41, "Círculo", 25.5)}
                ${big("arc", 30, "Arco", 17)}
                ${col(24, small("rect", "", 0, 3) + small("ellipse", "", 0, 3) + small("hatch", "", 0, 3), "margin-left:3.500px")}
            </ribbon-panel>
            <ribbon-panel w="199" label="Modificar" lw="34">
                ${col(57, small("move", "Desplazar", 33.5) + small("copy", "Copiar", 24) + small("stretch", "Estirar", 22), "margin-left:4.500px")}
                ${col(52, small("rotate", "Girar", 17) + small("mirror", "Simetría", 29) + small("scale", "Escala", 22))}
                ${col(68, small("trim", "Recortar", 29.5, 7) + small("fillet", "Empalme", 33.5, 7) + small("array", "Matriz", 22, 5))}
                ${col(12, small("erase") + small("explode") + small("offset"), "margin-left:-1px")}
            </ribbon-panel>
            <ribbon-panel w="121" label="Anotación" lw="36">
                ${big("text", 35, "Texto", 18.5)}
                ${big("dim", 26, "Acotar", 23, "")}
                ${col(56, small("linear", "Lineal", 20.5, 5) + small("leader", "Directriz", 29, 4.5) + small("table", "Tabla", 18), "margin-left:3px")}
            </ribbon-panel>
            <ribbon-panel w="216" label="Capas" lw="21">
                ${big("layerProps", 49, "Propiedades|de capa", "43|27", "")}
                ${col(165, `
                    <div class="row"><ribbon-combo w="138" style="margin-left:1px">
                        ${icon("bulb", "margin-left:3px", 0.95)}${icon("sun", "margin-left:3.500px", 0.95)}${icon("lock", "margin-left:4px", 0.95)}
                        <div class="sw" style="background:#a9aeb8;margin:0 3px 0 3px"></div>${text("0", 5)}
                    </ribbon-combo></div>
                    <div class="row">${layerIcons(["layOff", "layIso", "layFrz", "layLock", "layCur"])}${text("Establecer como actual", 81, "margin-left:.5px")}</div>
                    <div class="row">${layerIcons(["layOn", "layIso", "layThaw", "layUnlock", "layMatch"])}${text("Igualar capa", 42.5, "margin-left:.5px")}</div>`)}
            </ribbon-panel>
            <ribbon-panel w="113" label="Bloque" lw="24.5">
                ${big("insert", 32, "Insertar", 26.5)}
                ${col(81, small("blockNew", "Crear", 18.5) + small("blockEdit", "Editar", 20) + small("attEdit", "Editar atributos", 53.5, 4.5))}
            </ribbon-panel>
            <ribbon-panel w="184" label="Propiedades" lw="43" launcher>
                ${big("match", 50.5, "Igualar|propiedades", "24|43", "")}
                ${col(133, `
                    <div class="row">${icon("wheel")}<ribbon-combo w="119" flat style="margin-left:1px"><div class="sw" style="background:#6b7280;margin:0 3.500px 0 4px"></div>${text("PorCapa", 30)}</ribbon-combo></div>
                    <div class="row">${icon("weights")}<ribbon-combo w="119" style="margin-left:1px"><div class="ln" style="height:2px"></div>${text("PorCapa", 29.5)}</ribbon-combo></div>
                    <div class="row">${icon("ltype")}<ribbon-combo w="119" style="margin-left:1px"><div class="ln"></div>${text("PorCapa", 29.5)}</ribbon-combo></div>`)}
            </ribbon-panel>
            <ribbon-panel w="47" label="Grupos" lw="25.500">
                ${big("group", 29, "Grupo", 22, "")}
                ${col(16, `<div class="row" style="justify-content:center">${icon("ungroup", "", 0.94)}</div><div class="row" style="justify-content:center">${icon("grpEdit", "", 0.94)}</div><div class="row"><div class="sel">${icon("grpSel", "", 0.94)}</div></div>`)}
            </ribbon-panel>
            <ribbon-panel w="55" label="Utilidades" lw="34.500">
                ${big("measure", 37.5, "Medir", 20)}
                ${col(16, small("qselect") + small("selAll") + small("calc"), "margin-left:1.500px")}
            </ribbon-panel>
            <ribbon-panel w="62" label="Portapapeles" lw="45.500" plain>
                ${big("paste", 37, "Pegar", 20)}
                ${col(22, small("cut", "", 0, 2.5) + small("copyClip", "", 0, 2.5), "margin-left:2px")}
            </ribbon-panel>
            <ribbon-panel w="39" label="Vista" lw="16.500" launcher>
                ${big("base", 36, "Base", 16.5, 'menu style="margin-left:2.500px"')}
            </ribbon-panel>
            <div class="rest"></div>
        `;
    }
}

// Slanted tabs: used for the drawings on top and for the layouts at the bottom
class SlantTab extends CadElement {
    styles() {
        return `
            :host { display: flex; position: relative; align-items: center; flex: none; box-sizing: border-box; height: 16px; width: ${this.attr("w")}px; background: #3c4652; color: #eceef0; font-weight: 700; clip-path: polygon(6px 0, 100% 0, calc(100% - 6px) 100%, 0 100%); }
        `;
    }
}

class TabBar extends CadElement {
    styles() {
        return `
            :host { display: flex; align-items: center; height: 16px; color: #cbcfd4; background: #222933; }
            .slash { flex: none; width: 1px; height: 11px; background: #4a535e; transform: skewX(-27deg); }
        `;
    }

    template() {
        const slash = m => `<div class="slash" style="margin-left:${m}px"></div>`;
        if (this.attr("kind") === "files") {
            return `
                ${slash(8)}${text("Inicio", 19.5, "margin-left:7.500px")}
                <slant-tab w="63" style="margin-left:4.500px">${text("Dibujo2*", 32, "margin-left:11.500px")}${icon("close", "margin-left:6px;color:#a2a9b1", 0.7)}</slant-tab>
                ${icon("plusTab", "margin-left:5px", 0.95)}${slash(9)}`;
        }
        return `
            <slant-tab w="50" style="margin-left:6px">${text("Modelo", 28, "margin-left:11px")}</slant-tab>
            ${text("Presentación1", 49.5, "margin-left:4.500px")}${slash(7)}
            ${text("Presentación2", 49.5, "margin-left:8px")}${slash(7)}
            ${icon("plusTab", "margin-left:8.500px", 0.95)}${slash(8.5)}`;
    }
}

class StatusBar extends CadElement {
    styles() {
        return `
            :host { display: flex; align-items: center; margin: 0 1.500px 0 auto; height: 16px; color: #d5d8dc; }
        `;
    }

    template() {
        const b = (w, name, style = "") => slot(w, icon(name, "", 0.95), style, "boxed");
        const on = (name, style = "") => slot(15, icon(name, "", 0.95), style, "on");
        const arrow = (w, style = "") => slot(w, icon("caret"), style, "boxed");
        return `
            ${slot(37, text("MODELO", 33), "", "boxed")}
            ${on("grid", "margin-left:3px")}${b(17, "dots")}${arrow(9)}
            ${b(15, "ortho", "margin-left:3px")}${b(17, "polar")}${arrow(10)}${b(17, "iso")}${arrow(10)}
            ${on("track", "margin-left:1px")}${on("osnap", "margin-left:2px")}${arrow(10)}
            ${on("annoVis", "margin-left:3px")}${b(17, "annoAuto")}${b(16, "anno")}
            ${slot(22, text("1:1", 9) + icon("caret", "margin-left:3px", 0.9), "", "boxed")}
            ${b(16, "gear", "margin-left:2px")}${arrow(12)}${b(14, "plus")}
            ${b(16, "isolate", "margin-left:3px")}${b(16, "clean", "margin-left:3px")}${b(15, "menu", "margin-left:1px")}
        `;
    }
}

class ViewCube extends CadElement {
    styles() {
        return `
            :host { position: absolute; left: 1178.500px; top: 25.500px; width: 92px; color: #b0b5b8; }
            .dial { display: grid; grid-template: 15px 61px 15px / 15px 62px 15px; place-items: center; font: 700 12px/14px "Open Sans", sans-serif; border-radius: 50%; background: radial-gradient(circle at 46px 45.500px, transparent 31.500px, #434b54 32.500px 39.500px, transparent 40.500px); }
            .cube { grid-area: 2 / 2; display: flex; align-items: center; justify-content: center; width: 34px; height: 34px; background: #a9acad; color: #4a4f54; font: 700 7.500px/10px "Open Sans", sans-serif; box-shadow: inset 0 0 0 1px #bdbfc0, inset 0 0 0 7px #a9acad, inset 0 0 0 30px #9fa4a9; }
            .scu { display: flex; align-items: center; width: 31px; height: 11px; box-sizing: border-box; margin: 13px 0 0 30.500px; padding-left: 3px; border-radius: 3px; background: #8b9099; border: 1px solid #a4a8b0; color: #4d525b; --dy: 0; }
        `;
    }

    template() {
        return `
            <div class="dial">
                <div style="grid-area:1/2">N</div><div style="grid-area:2/1">O</div>
                <div class="cube">${text("SUPERIOR", 29.5)}</div>
                <div style="grid-area:2/3">E</div><div style="grid-area:3/2">S</div>
            </div>
            <div class="scu">${text("SCU", 14)}${icon("caret", "margin-left:4px;color:#a9adb4", 0.9)}</div>
        `;
    }
}

class NavBar extends CadElement {
    styles() {
        return `
            :host { position: absolute; left: 1256px; top: 158px; display: flex; flex-direction: column; align-items: center; box-sizing: border-box; width: 21px; height: 141px; padding-top: 12px; border-radius: 3px; background: #5b6165; border: 1px solid #666c70; color: #464d51; }
        `;
    }

    template() {
        return `
            ${icon("wheelNav", "", 0.95)}
            ${icon("caretSmall", "margin-top:5px", 0.6)}
            ${icon("hand", "margin-top:5px", 0.95)}
            ${icon("zoomExt", "margin-top:4px", 0.95)}
            ${icon("caretSmall", "margin-top:3px", 0.6)}
            ${icon("orbit", "margin-top:4px", 0.95)}
            ${icon("caretSmall", "margin-top:3px", 0.6)}
            ${icon("motion", "margin-top:5px", 0.9)}
        `;
    }
}

class CommandLine extends CadElement {
    styles() {
        return `
            :host { position: absolute; left: 328px; top: 505px; display: flex; width: 625px; height: 48px; --dy: 1px; color: #16191c; font: 7.750px/10px "DejaVu Sans Mono", monospace; }
            .side { display: flex; flex-direction: column; align-items: center; width: 16px; background: #2b323b; color: #c3c7cb; padding-top: 3px; box-sizing: border-box; }
            .main { flex: 1; display: flex; flex-direction: column; }
            .history { height: 33px; padding: 2px 0 0 1px; box-sizing: border-box; background: #949898; }
            .entry { display: flex; align-items: center; height: 15px; padding: 0 2px; background: #b8bcbc; border-top: 1px solid #5f6668; box-sizing: border-box; }
        `;
    }

    template() {
        return `
            <div class="side">${icon("grip", "", 0.9)}${icon("close", "margin-top:5px", 0.8)}${icon("wrench", "margin-top:8px", 0.85)}</div>
            <div class="main">
                <div class="history">
                    ${text("Especifique un punto de inserción o [Puntobase/Escala/Girar/Descomponer/Repetir]:", 378)}
                    ${text("Comando:", 37.5)}
                    ${text("Comando:", 37.5)}
                </div>
                <div class="entry">${icon("prompt", "color:#4b5153")}${icon("caret", "margin-left:2px;color:#4b5153")}${text("_attdef", 32.5, "margin-left:1px")}${icon("caretUp", "margin-left:auto;color:#3f4446", 0.8)}</div>
            </div>
        `;
    }
}

// Model space: grid, wireframe and everything that floats over them
class ModelSpace extends CadElement {
    styles() {
        return `
            :host { display: block; position: relative; height: 553px; overflow: hidden; background: #212830; }
            .scene { position: absolute; inset: 0; }
            .view { display: flex; justify-content: space-between; padding: 5px 8px 0 2px; color: #ced1d4; position: relative; }
            .ctl { display: flex; gap: 7px; align-items: center; padding-top: 1px; }
        `;
    }

    template() {
        let lines = "";
        for (let i = -1; i < 46; i++) {
            const x = 125.3 + (i - 4) * 27.9;
            const major = (i - 4) % 5 === 0;
            lines += `<path d="M${x} 0V553" stroke="${major ? "#2b353e" : "#222a32"}"/>`;
        }
        for (let i = -4; i < 18; i++) {
            const y = 129.8 + i * 27.9;
            lines += `<path d="M0 ${y}H1280" stroke="${i % 5 === 0 ? "#2a333c" : "#222a32"}"/>`;
        }
        return `
            <svg class="scene" width="1280" height="553" fill="none">
                ${lines}
                <path d="M417 117.300h378.500v83.500h-378.500ZM431 131h56v56h-56Z" stroke="#aeb3b7"/>
                <path d="M13.500 506v33.500h33.500M10.500 536.500h6v6h-6Z" stroke="#b9bdc0"/>
                <path d="m14.500 495 4 4.500 4-4.500M18.500 499.500v4M50 530.500l8.500 8M58.500 530.500l-8.500 8" stroke="#b9bdc0"/>
            </svg>
            <div class="view">
                ${text("[−][Superior][Estructura alámbrica 2D]", 134.5)}
                <div class="ctl">${icon("mini", "color:#e8eaec")}${icon("restore", "color:#e8eaec", 0.85)}${icon("close", "color:#e8eaec", 0.75)}</div>
            </div>
            <view-cube></view-cube>
            <nav-bar></nav-bar>
            <command-line></command-line>
        `;
    }
}

class WinTaskbar extends CadElement {
    styles() {
        return `
            :host { display: flex; height: 27px; background: linear-gradient(90deg, #151619 0, #191817 380px, #241b24 520px, #2b2530 600px, #3b342d 640px, #372f28 760px, #251f1b 900px, #1a1918 1040px, #191919 1280px); color: #e6e6e6; }
            .app { display: flex; position: relative; align-items: center; justify-content: center; flex: none; box-sizing: border-box; width: 32.650px; height: 27px; }
            .app[data-run] { background: linear-gradient(#7bb5e0, #7bb5e0) 50% 100% / 26px 2px no-repeat; }
            .app[data-front] { background: linear-gradient(#7bb5e0, #7bb5e0) 50% 100% / 32px 2px no-repeat, #5b5557; }
            .tile { display: flex; align-items: center; justify-content: center; width: 16px; height: 16px; border-radius: 2px; font-weight: 700; --dy: 0; }
            .tag { position: absolute; color: #fff; font: 700 9px/10px "Open Sans", sans-serif; }
            .tray { display: flex; align-items: center; margin-left: auto; }
            .clock { display: flex; flex-direction: column; align-items: center; gap: 2px; width: 38px; margin-left: 10px; --dy: 0; }
            .bell { position: relative; margin-left: 12px; width: 23px; }
            .badge { position: absolute; left: 6px; top: 5px; display: flex; align-items: center; justify-content: center; width: 9px; height: 9px; border: 1px solid #8e8e8e; border-radius: 50%; background: #303030; font-size: 8px; }
            .edge { width: 1px; height: 27px; margin-right: 3px; background: #55524f; }
        `;
    }

    template() {
        const app = (inner, state = "") => `<div class="app" ${state}>${inner}</div>`;
        const tile = (s, w, bg, fg, size, edge = "none") => `<div class="tile" style="background:${bg};color:${fg};font-size:${size}px;box-shadow:${edge}">${text(s, w)}</div>`;
        return `
            <div class="app" style="width:34px;padding-right:2px">${icon("windows")}</div>
            ${app(icon("chrome1"), "data-run")}${app(icon("chrome2"))}${app(icon("chrome3"))}
            ${app(icon("folder"), "data-run")}${app(icon("snip"))}${app(icon("note"))}
            ${app(icon("obs"), "data-run")}${app(icon("sync"))}
            ${app(tile("Live", 11, "#26242a", "#e4e4e4", 6))}
            ${app(tile("Yk", 11, "#2b0b52", "#b48cf0", 9))}
            ${app(icon("boat"))}
            ${app(tile("Ps", 9, "#0a1a45", "#a9cdf5", 8, "inset 0 0 0 1px #7ea4d8"))}
            ${app(icon("orange"))}${app(icon("ring"))}${app(icon("filmora"))}
            ${app(icon("telegram"), "data-run")}
            ${app(`${icon("acad")}<span class="tag" style="top:6px">A</span><span class="tag" style="top:14px;font-size:4px">CAD</span>`, "data-front")}
            <div class="tray">
                ${slot(16, icon("chevUp", "", 0.85))}${slot(16, icon("net", "", 0.95))}${slot(16, icon("sound", "", 0.95))}${slot(16, icon("telegram", "", 0.68))}
                ${slot(17, icon("battery", "", 0.95))}${slot(20, icon("pen", "", 0.95))}
                ${text("ESP", 13, "margin-left:5px")}
                <div class="clock">${text("12:14", 18.5)}${text("21/02/2025", 38)}</div>
                <div class="bell">${icon("notif", "", 0.9)}<div class="badge">7</div></div>
            </div>
            <div class="edge"></div>
        `;
    }
}

class GroupBox extends CadElement {
    styles() {
        return `
            :host { display: block; box-sizing: border-box; border: 1px solid #dcdcdc; }
            .legend { display: table; margin: -6px 0 0 3.500px; padding: 0 1px; background: #f0f0f0; line-height: 11px; }
        `;
    }

    template() { return `<div class="legend">${text(this.attr("legend"), this.attr("lw"))}</div><slot></slot>`; }
}

class CheckRow extends CadElement {
    styles() {
        return `
            :host { display: flex; align-items: center; gap: 2px; }
            .box { width: 9px; height: 9px; box-sizing: border-box; border: 1px solid #444; background: #fff; }
            .box svg { display: block; }
            :host([disabled]) { color: #7e7e7e; }
            :host([disabled]) .box { border-color: #cdcdcd; }
        `;
    }

    template() {
        const tick = this.hasAttribute("checked") ? `<svg width="7" height="7" fill="none" stroke="#333"><path d="m1 3.500 1.800 2L6.200 1.200"/></svg>` : "";
        return `<div class="box">${tick}</div>${text(this.attr("label"), this.attr("lw"))}`;
    }
}
const check = (label, lw, attrs = "", style = "height:14.100px") => `<check-row label="${label}" lw="${lw}" ${attrs} style="${style}"></check-row>`;

class FieldBox extends CadElement {
    styles() {
        return `
            :host { display: flex; flex: none; box-sizing: border-box; width: ${this.attr("w")}px; height: 15px; padding: 1px 0 0 1.500px; border: 1px solid #7a7a7a; background: #fff; color: #2b2b2b; }
            :host([soft]) { border-color: #b5cfe0; }
            :host([focus]) { border-color: #222; }
            :host([disabled]) { background: #f0f0f0; border-color: #cccccc; color: #7d7d7d; }
            :host([combo]) { background: #e3e3e3; border-color: #adadad; align-items: center; padding: 0 3px 0 2px; justify-content: space-between; }
        `;
    }

    template() {
        return text(this.attr("value"), this.attr("vw")) + (this.hasAttribute("combo") ? icon("chev", "", 0.9) : "");
    }
}
const field = (w, value, vw, attrs = "") => `<field-box w="${w}" value="${value}" vw="${vw}" ${attrs}></field-box>`;

class AttributeDialog extends CadElement {
    styles() {
        return `
            :host { position: absolute; left: 488px; top: 205px; width: 304px; height: 278.500px; --dy: .2px; background: #f0f0f0; color: #262626; font: 8.3px/10px "Liberation Sans", Arial, sans-serif; box-shadow: 0 2px 9px rgba(0, 0, 0, .45); }
            header { position: relative; display: flex; align-items: center; height: 20px; padding: 0 6px; background: #fff; font-family: "Open Sans", sans-serif; --dy: .7px; }
            header b { position: absolute; left: 8.500px; top: 4px; color: #fff; font-size: 6px; }
            .cols { display: grid; grid-template-columns: 103px 180px; column-gap: 6px; padding: 11.500px 7px 0 7.500px; height: 208.500px; box-sizing: border-box; }
            .row { display: flex; height: 15px; align-items: center; }
            .lab { flex: none; }
            .tool { display: flex; align-items: center; justify-content: center; box-sizing: border-box; width: 16px; height: 15px; margin-left: 2px; background: #e1e1e1; border: 1px solid #c0c0c0; }
            .off { color: #a3a3a3; }
            .buttons { display: flex; margin: 10px 0 0 124px; }
            .btn { display: flex; align-items: center; justify-content: center; box-sizing: border-box; width: 49px; height: 15px; background: #e1e1e1; border: 1px solid #adadad; }
            .btn.main { border: 2px solid #2b87d6; }
        `;
    }

    template() {
        const lab = (s, lw, w, cls = "", dy = 2) => `<div class="lab ${cls}" style="width:${w}px;padding-top:${dy}px">${text(s, lw)}</div>`;
        const coord = (s, m) => `<div class="row" style="margin:${m}px 0 0 6px"><div class="lab off" style="width:18.500px">${text(s, 6)}</div>${field(71, "0", 4.5, "disabled")}</div>`;
        const tool = name => `<div class="tool">${icon(name, "", 0.95)}</div>`;
        return `
            <header>${icon("dlgLogo")}<b>A</b>${text("Definir atributos", 57, "margin-left:3.500px")}${icon("closeThin", "margin-left:auto")}</header>
            <div class="cols">
                <div>
                    <group-box legend="Modo" lw="18" style="height:95px">
                        <div style="margin:1.500px 0 0 4.500px">
                            ${check("Invisible", 25)}${check("Constante", 31.5)}${check("Verificar", 25)}
                            ${check("Predefinido", 35)}${check("Bloquear posición", 55.5, "checked")}${check("Líneas múltiples", 50)}
                        </div>
                    </group-box>
                    <group-box legend="Punto de inserción" lw="58.500" style="height:91px;margin-top:10.500px">
                        <div style="margin:2px 0 0 5px">${check("Precisar en pantalla", 61.5, "checked")}</div>
                        ${coord("X:", 5)}${coord("Y:", 3.8)}${coord("Z:", 4)}
                    </group-box>
                </div>
                <div>
                    <group-box legend="Atributo" lw="24" style="height:70px">
                        <div class="row" style="margin:1.500px 0 0 6.500px">${lab("Identificador:", 40.5, 46, "", 4)}${field(121.5, "CurvaIn", 25)}</div>
                        <div class="row" style="margin:5.500px 0 0 6.500px">${lab("Solicitud:", 28, 46, "", 1)}${field(121.5, "Curva e Intensidad Nominal", 86.5)}</div>
                        <div class="row" style="margin:5px 0 0 6.500px">${lab("Por defecto:", 38.5, 46, "", 2)}${field(103, "C10", 13, "soft")}${tool("field")}</div>
                    </group-box>
                    <group-box legend="Parámetros de texto" lw="62" style="height:116px;margin-top:11px">
                        <div class="row" style="margin:0 0 0 4.500px">${lab("Justificación:", 40.5, 80, "", 0)}${field(89.5, "Izquierda", 28, "combo")}</div>
                        <div class="row" style="margin:3.500px 0 0 4.500px">${lab("Estilo de texto:", 46, 80, "", 0)}${field(89.5, "Standard", 28, "combo")}</div>
                        <div style="margin:0 0 0 4.500px">${check("Anotativo", 29)}</div>
                        <div class="row" style="margin:1.500px 0 0 4.500px">${lab("Altura de texto:", 47, 80)}${field(74, "2.5", 10, "focus")}${tool("pick")}</div>
                        <div class="row" style="margin:6.300px 0 0 4.500px">${lab("Rotación:", 30.5, 80, "", 1)}${field(74, "0", 4.5)}${tool("pick")}</div>
                        <div class="row" style="margin:6px 0 0 4.500px">${lab("Anchura de contorno:", 68, 80, "off", 0)}${field(74, "0", 4.5, "disabled")}</div>
                    </group-box>
                </div>
            </div>
            ${check("Alinear por debajo de la definición de atributos anterior", 170, "disabled", "height:13px;margin:5px 0 0 14px")}
            <div class="buttons">
                <div class="btn main">${text("Aceptar", 25)}</div>
                <div class="btn" style="margin-left:9px">${text("Cancelar", 28.5)}</div>
                <div class="btn" style="margin-left:17.500px">${text("Ayuda", 19.5)}</div>
            </div>
        `;
    }
}

class HelpTip extends CadElement {
    styles() {
        return `
            :host { position: absolute; left: 717px; top: 398px; box-sizing: border-box; width: 234px; height: 72.500px; padding: 5.500px 0 0 5.500px; border-radius: 1px; background: rgba(244, 248, 250, .94); color: #4c5054; box-shadow: 0 0 4px rgba(0, 0, 0, .3); }
        `;
    }

    template() {
        return [
            ["Determina la altura del texto del atributo. Introduzca un valor o", 221],
            ["pulse Altura para precisar una altura con el dispositivo", 189.5],
            ["señalador. La altura se mide desde el origen hasta la ubicación", 218],
            ["que especifique. Si selecciona un estilo de texto que tenga una", 219.5],
            ["altura fija (distinta de 0.0), o si selecciona Alinear en la lista", 204.5],
            ["Justificación, la opción Altura no estará disponible.", 177.5],
        ].map(l => text(l[0], l[1])).join("");
    }
}

class CadApp extends CadElement {
    styles() {
        return `
            :host { display: flex; flex-direction: column; width: 1280px; height: 720px; background: #222933; }
            .files { box-sizing: border-box; height: 20px; padding-top: 2px; border-bottom: 2px solid #3a434e; }
            .rule { height: 2.500px; background: #3a434e; }
            .bottom { display: flex; align-items: center; height: 19.500px; }
            .pointer { position: absolute; left: 692px; top: 386px; }
        `;
    }

    template() {
        return `
            <title-bar></title-bar>
            <menu-tabs></menu-tabs>
            <cad-ribbon></cad-ribbon>
            <div class="files"><tab-bar kind="files"></tab-bar></div>
            <model-space></model-space>
            <div class="rule"></div>
            <div class="bottom"><tab-bar kind="layouts"></tab-bar><status-bar></status-bar></div>
            <win-taskbar></win-taskbar>
            <attribute-dialog></attribute-dialog>
            <div class="pointer">${icon("cursor", "", 0.95)}</div>
            <help-tip></help-tip>
        `;
    }
}

customElements.define("cad-app", CadApp);
customElements.define("title-bar", TitleBar);
customElements.define("menu-tabs", MenuTabs);
customElements.define("cad-ribbon", CadRibbon);
customElements.define("ribbon-panel", RibbonPanel);
customElements.define("ribbon-combo", RibbonCombo);
customElements.define("big-tool", BigTool);
customElements.define("small-tool", SmallTool);
customElements.define("tab-bar", TabBar);
customElements.define("slant-tab", SlantTab);
customElements.define("model-space", ModelSpace);
customElements.define("view-cube", ViewCube);
customElements.define("nav-bar", NavBar);
customElements.define("command-line", CommandLine);
customElements.define("status-bar", StatusBar);
customElements.define("win-taskbar", WinTaskbar);
customElements.define("attribute-dialog", AttributeDialog);
customElements.define("group-box", GroupBox);
customElements.define("check-row", CheckRow);
customElements.define("field-box", FieldBox);
customElements.define("help-tip", HelpTip);
customElements.define("bar-slot", BarSlot);
customElements.define("ui-icon", UiIcon);
// last, so that every inherited font is in place when the text is measured
customElements.define("fit-text", FitText);
</script>
</body>
</html>
